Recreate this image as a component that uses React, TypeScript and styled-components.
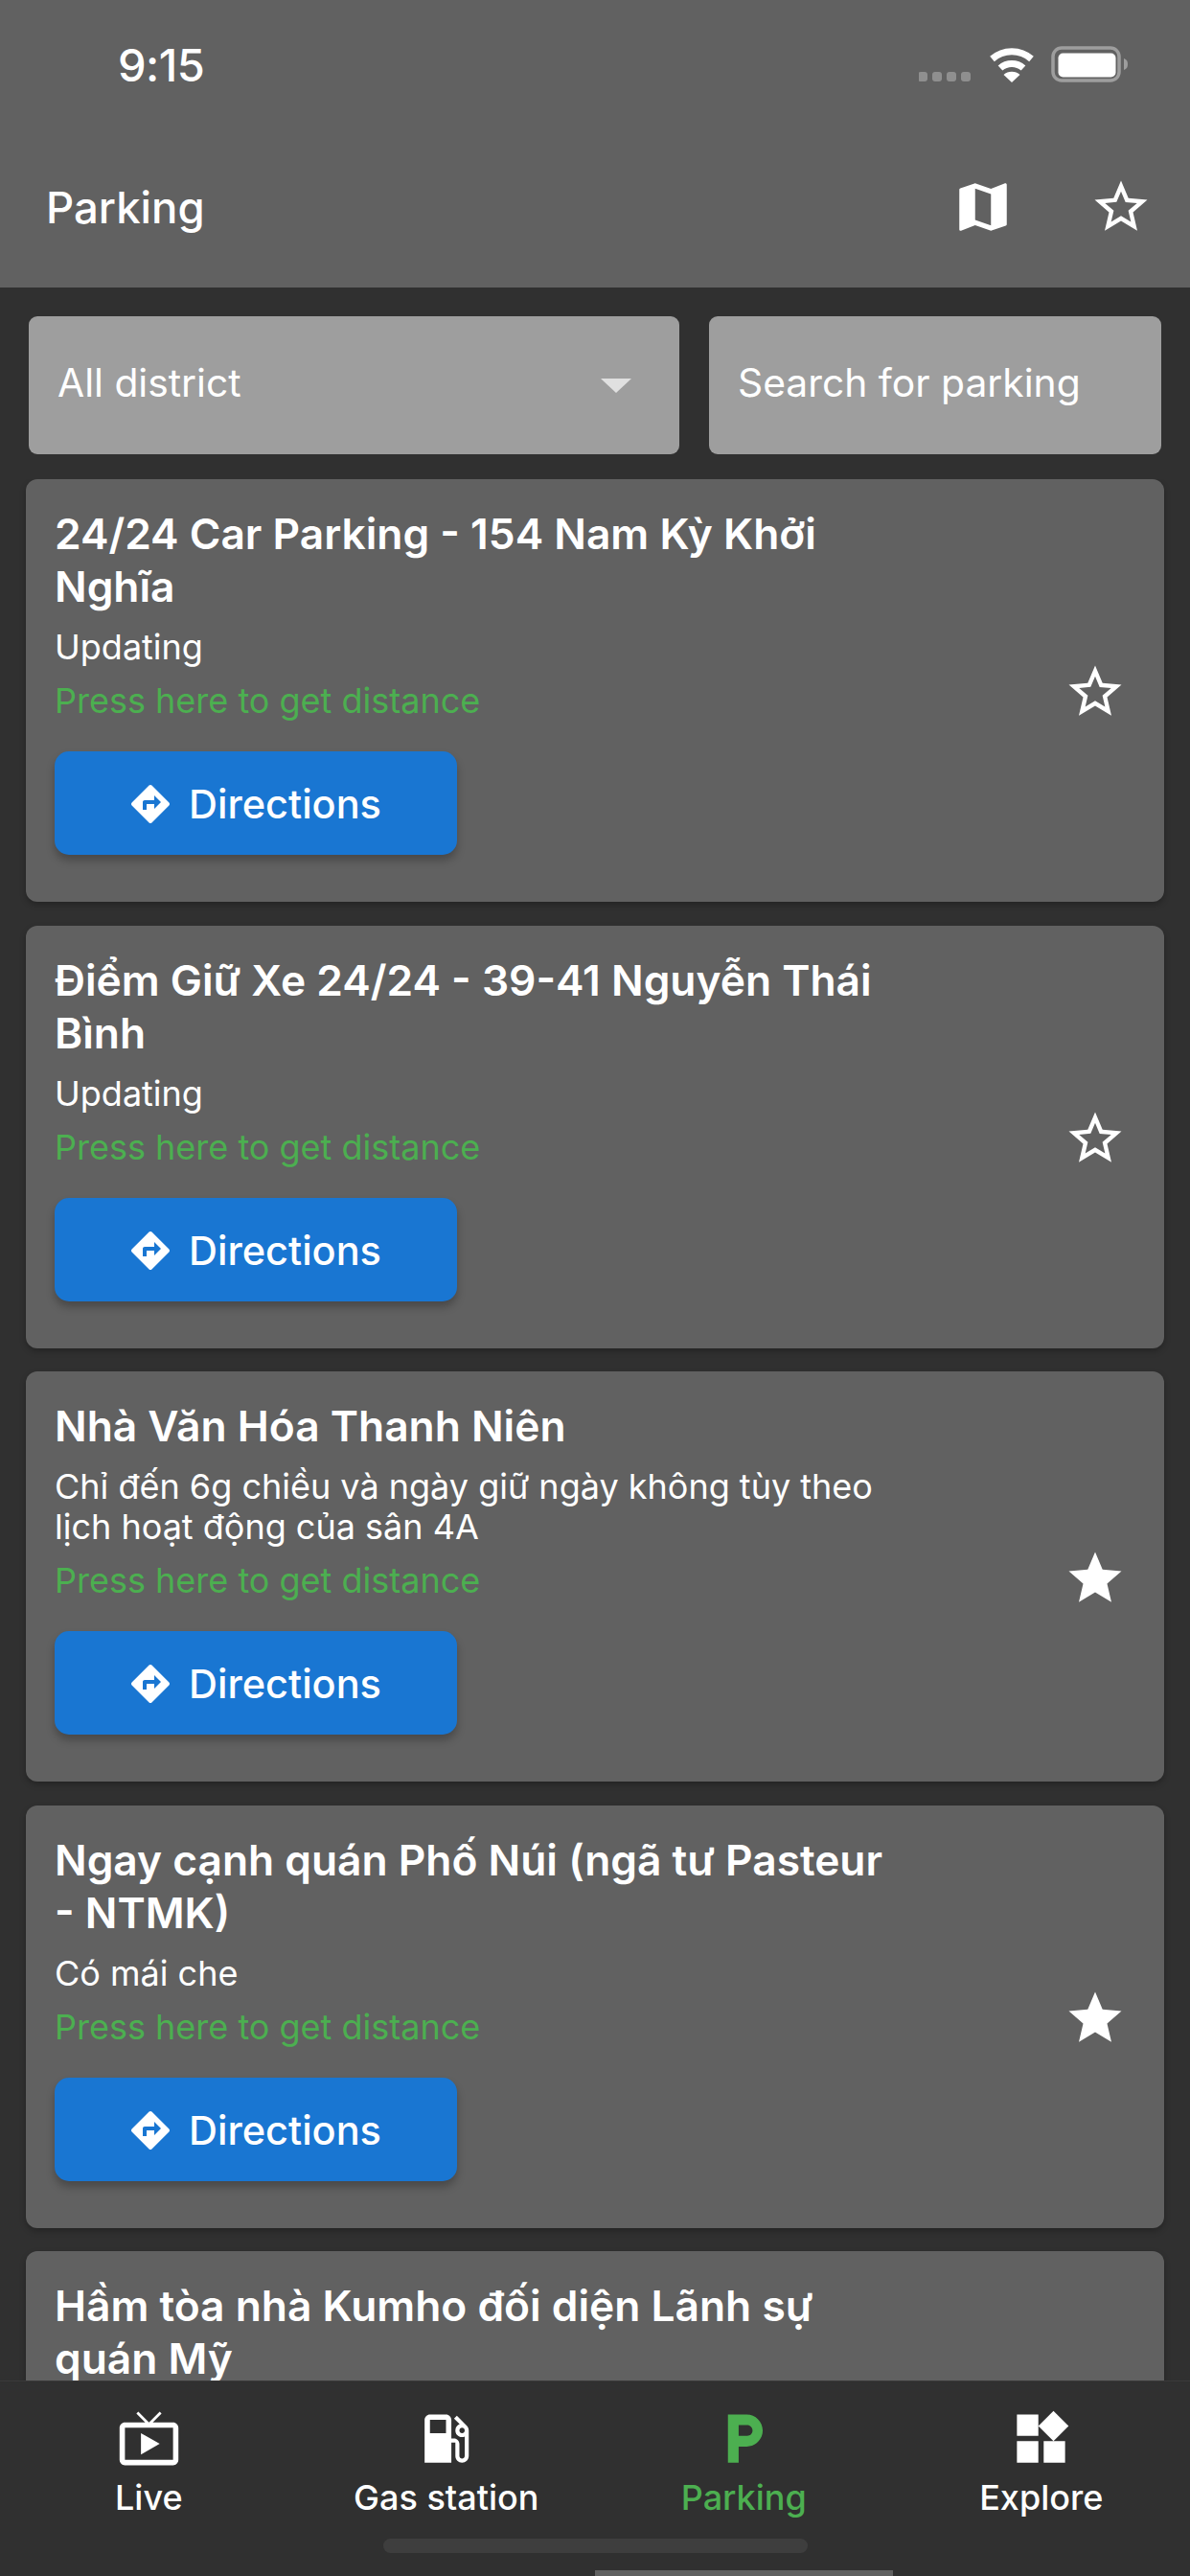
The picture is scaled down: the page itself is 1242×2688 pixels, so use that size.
import React from 'react';
import styled, { createGlobalStyle } from 'styled-components';

const GlobalStyle = createGlobalStyle`
  html, body {
    margin: 0;
    padding: 0;
    background: #303030;
  }
  body {
    font-family: 'Inter', 'Noto Sans', sans-serif;
    color: #ffffff;
  }
`;

const Screen = styled.div`
  width: 1242px;
  height: 2688px;
  display: flex;
  flex-direction: column;
  overflow: hidden;
  background: #303030;
`;

const Header = styled.header`
  height: 300px;
  flex: none;
  background: #616161;
  display: flex;
  flex-direction: column;
`;

const StatusBar = styled.div`
  height: 132px;
  display: flex;
  align-items: flex-start;
  justify-content: space-between;
  padding: 0 63px 0 123px;
`;

const Clock = styled.div`
  font-size: 47px;
  font-weight: 500;
  line-height: 56px;
  margin-top: 40px;
  letter-spacing: -0.5px;
`;

const StatusIcons = styled.svg`
  width: 220px;
  height: 40px;
  margin-top: 48px;
`;

const Toolbar = styled.div`
  height: 168px;
  display: flex;
  align-items: center;
  padding: 0 39px 0 48px;
`;

const ScreenTitle = styled.h1`
  margin: 0;
  flex: 1;
  font-size: 45.5px;
  font-weight: 500;
`;

const ToolbarIcons = styled.div`
  display: flex;
  gap: 78px;
`;

const Icon = styled.svg<{ $size: number; $color?: string }>`
  width: ${(p) => p.$size}px;
  height: ${(p) => p.$size}px;
  flex: none;
  display: block;
  fill: ${(p) => p.$color || '#ffffff'};
`;

const Filters = styled.div`
  flex: none;
  display: flex;
  gap: 31px;
  padding: 30px 30px 26px;
`;

const FilterBox = styled.div<{ $width: number }>`
  width: ${(p) => p.$width}px;
  height: 144px;
  box-sizing: border-box;
  background: #9e9e9e;
  border-radius: 9px;
  display: flex;
  align-items: center;
  justify-content: space-between;
  padding: 0 30px 6px;
  font-size: 40.8px;
`;

const Caret = styled.div`
  width: 0;
  height: 0;
  margin: 6px 20px 0 0;
  border-left: 16px solid transparent;
  border-right: 16px solid transparent;
  border-top: 15px solid #e0e0e0;
`;

const List = styled.div`
  flex: 1;
  min-height: 0;
  overflow: hidden;
  padding: 0 27px;
  display: flex;
  flex-direction: column;
  gap: 24.5px;
`;

const Card = styled.article`
  flex: none;
  min-height: 349px;
  display: flex;
  align-items: center;
  background: #616161;
  border-radius: 12px;
  padding: 30px 39px 49px 30px;
  box-shadow: 0 3px 6px rgba(0, 0, 0, 0.25);
`;

const CardBody = styled.div`
  flex: 1;
  min-width: 0;
  align-self: flex-start;
  padding-right: 173px;
`;

const CardTitle = styled.h2`
  margin: 0;
  font-size: 44.3px;
  font-weight: 600;
  line-height: 55px;
`;

const Note = styled.p`
  margin: 14px 0 0;
  font-size: 36px;
  line-height: 42px;
`;

const Distance = styled(Note)`
  color: #4caf50;
`;

const DirectionsButton = styled.button`
  width: 420px;
  height: 108px;
  margin-top: 32px;
  padding: 2px 3px 0 0;
  display: flex;
  align-items: center;
  justify-content: center;
  gap: 16px;
  border: none;
  border-radius: 15px;
  background: #1976d2;
  color: #ffffff;
  font-family: inherit;
  font-size: 41.5px;
  font-weight: 500;
  box-shadow: 0 6px 9px rgba(0, 0, 0, 0.25);
`;

const SaveStar = styled.div`
  flex: none;
  margin-top: 22px;
`;

const Nav = styled.nav`
  flex: none;
  height: 204px;
  background: #303030;
  display: flex;
  flex-direction: column;
  align-items: center;
  padding-top: 26px;
  box-sizing: border-box;
  border-top: 1px solid #3a3a3a;
`;

const Tabs = styled.div`
  width: 100%;
  display: flex;
`;

const TabItem = styled.div<{ $active?: boolean }>`
  flex: 1;
  display: flex;
  flex-direction: column;
  align-items: center;
  gap: 7px;
  font-size: 36px;
  font-weight: 500;
  line-height: 42px;
  color: ${(p) => (p.$active ? '#4caf50' : '#ffffff')};
`;

const HomeIndicator = styled.div`
  width: 443px;
  height: 15px;
  margin-top: 22px;
  border-radius: 8px;
  background: #3e3e3e;
`;

const ScrollThumb = styled.div`
  width: 311px;
  height: 6px;
  margin: 18px 0 0 311px;
  background: #616161;
`;

const paths = {
  map: 'M20.5 3l-.16.03L15 5.1 9 3 3.36 4.9c-.21.07-.36.25-.36.48V20.5c0 .28.22.5.5.5l.16-.03L9 18.9l6 2.1 5.64-1.9c.21-.07.36-.25.36-.48V3.5c0-.28-.22-.5-.5-.5zM15 19l-6-2.11V5l6 2.11V19z',
  starBorder: 'M22 9.24l-7.19-.62L12 2 9.19 8.63 2 9.24l5.46 4.73L5.82 21 12 17.27 18.18 21l-1.63-7.03L22 9.24zM12 15.4l-3.76 2.27 1-4.28-3.32-2.88 4.38-.38L12 6.1l1.71 4.04 4.38.38-3.32 2.88 1 4.28L12 15.4z',
  star: 'M12 17.27L18.18 21l-1.64-7.03L22 9.24l-7.19-.61L12 2 9.19 8.63 2 9.24l5.46 4.73L5.82 21z',
  directions: 'M21.71 11.29l-9-9c-.39-.39-1.02-.39-1.41 0l-9 9c-.39.39-.39 1.02 0 1.41l9 9c.39.39 1.02.39 1.41 0l9-9c.39-.38.39-1.01 0-1.41zM14 14.5V12h-4v3H8v-4c0-.55.45-1 1-1h5V7.5l3.5 3.5-3.5 3.5z',
  tv: 'M21 6h-7.59l3.29-3.29L16 2l-4 4-4-4-.71.71L10.59 6H3c-1.1 0-2 .89-2 2v12c0 1.1.9 2 2 2h18c1.1 0 2-.9 2-2V8c0-1.11-.9-2-2-2zm0 14H3V8h18v12zM9 10v8l7-4z',
  gas: 'M19.77 7.23l.01-.01-3.72-3.72L15 4.56l2.11 2.11c-.94.36-1.61 1.26-1.61 2.33 0 1.38 1.12 2.5 2.5 2.5.36 0 .69-.08 1-.21v7.21c0 .55-.45 1-1 1s-1-.45-1-1V14c0-1.1-.9-2-2-2h-1V5c0-1.1-.9-2-2-2H6c-1.1 0-2 .9-2 2v16h10v-7.5h1.5v5c0 1.38 1.12 2.5 2.5 2.5s2.5-1.12 2.5-2.5V9c0-.69-.28-1.32-.73-1.77zM12 10H6V5h6v5zm6 0c-.55 0-1-.45-1-1s.45-1 1-1 1 .45 1 1-.45 1-1 1z',
  parking: 'M13 3H6v18h4v-6h3c3.31 0 6-2.69 6-6s-2.69-6-6-6zm.2 8H10V7h3.2c1.1 0 2 .9 2 2s-.9 2-2 2z',
  widgets: 'M13 13v8h8v-8h-8zM3 21h8v-8H3v8zM3 3v8h8V3H3zm13.66-1.31L11 7.34 16.66 13l5.66-5.66-5.66-5.65z',
};

const Glyph = ({ d, size, color }: { d: string; size: number; color?: string }) => (
  <Icon viewBox="0 0 24 24" $size={size} $color={color}>
    <path d={d} fillRule="evenodd" />
  </Icon>
);

type Parking = { title: string; note?: string; saved?: boolean };

// the last row only shows its title above the tab bar
const parkings: Parking[] = [
  { title: '24/24 Car Parking - 154 Nam Kỳ Khởi Nghĩa', note: 'Updating' },
  { title: 'Điểm Giữ Xe 24/24 - 39-41 Nguyễn Thái Bình', note: 'Updating' },
  {
    title: 'Nhà Văn Hóa Thanh Niên',
    note: 'Chỉ đến 6g chiều và ngày giữ ngày không tùy theo lịch hoạt động của sân 4A',
    saved: true,
  },
  { title: 'Ngay cạnh quán Phố Núi (ngã tư Pasteur - NTMK)', note: 'Có mái che', saved: true },
  { title: 'Hầm tòa nhà Kumho đối diện Lãnh sự quán Mỹ' },
];

const tabs = [
  { label: 'Live', icon: paths.tv },
  { label: 'Gas station', icon: paths.gas },
  { label: 'Parking', icon: paths.parking, active: true },
  { label: 'Explore', icon: paths.widgets },
];

const App: React.FC = () => (
  <Screen>
    <GlobalStyle />
    <Header>
      <StatusBar>
        <Clock>9:15</Clock>
        <StatusIcons viewBox="0 0 220 40">
          <g fill="#8f8f8f">
            <rect x="-1" y="27" width="10" height="10" rx="3" />
            <rect x="14" y="27" width="10" height="10" rx="3" />
            <rect x="29" y="27" width="10" height="10" rx="3" />
            <rect x="44" y="27" width="10" height="10" rx="3" />
          </g>
          <g fill="none" stroke="#ffffff" strokeWidth="7">
            <path d="M76.5 13.5 A31 31 0 0 1 117.5 13.5" />
            <path d="M85 23 A18 18 0 0 1 109 23" />
          </g>
          <path d="M97 38 L88.5 30 A13 13 0 0 1 105.5 30 Z" fill="#ffffff" />
          <rect x="140" y="2" width="69" height="34" rx="9" fill="none" stroke="#9e9e9e" strokeWidth="3.5" />
          <rect x="146" y="8" width="60" height="25" rx="5" fill="#ffffff" transform="translate(-.5 -.5)" />
          <path d="M214 13 C217 14 218 16 218 19 C218 22 217 24 214 25 Z" fill="#9e9e9e" />
        </StatusIcons>
      </StatusBar>
      <Toolbar>
        <ScreenTitle>Parking</ScreenTitle>
        <ToolbarIcons>
          <Glyph d={paths.map} size={66} />
          <Glyph d={paths.starBorder} size={66} />
        </ToolbarIcons>
      </Toolbar>
    </Header>

    <Filters>
      <FilterBox $width={679}>
        All district
        <Caret />
      </FilterBox>
      <FilterBox $width={472}>Search for parking</FilterBox>
    </Filters>

    <List>
      {parkings.map((item) => (
        <Card key={item.title}>
          <CardBody>
            <CardTitle>{item.title}</CardTitle>
            {item.note && (
              <>
                <Note>{item.note}</Note>
                <Distance>Press here to get distance</Distance>
                <DirectionsButton>
                  <Glyph d={paths.directions} size={48} />
                  Directions
                </DirectionsButton>
              </>
            )}
          </CardBody>
          <SaveStar>
            <Glyph d={item.saved ? paths.star : paths.starBorder} size={66} />
          </SaveStar>
        </Card>
      ))}
    </List>

    <Nav>
      <Tabs>
        {tabs.map((tab) => (
          <TabItem key={tab.label} $active={tab.active}>
            <Glyph d={tab.icon} size={67} color={tab.active ? '#4caf50' : '#ffffff'} />
            {tab.label}
          </TabItem>
        ))}
      </Tabs>
      <HomeIndicator />
      <ScrollThumb />
    </Nav>
  </Screen>
);

export default App;
